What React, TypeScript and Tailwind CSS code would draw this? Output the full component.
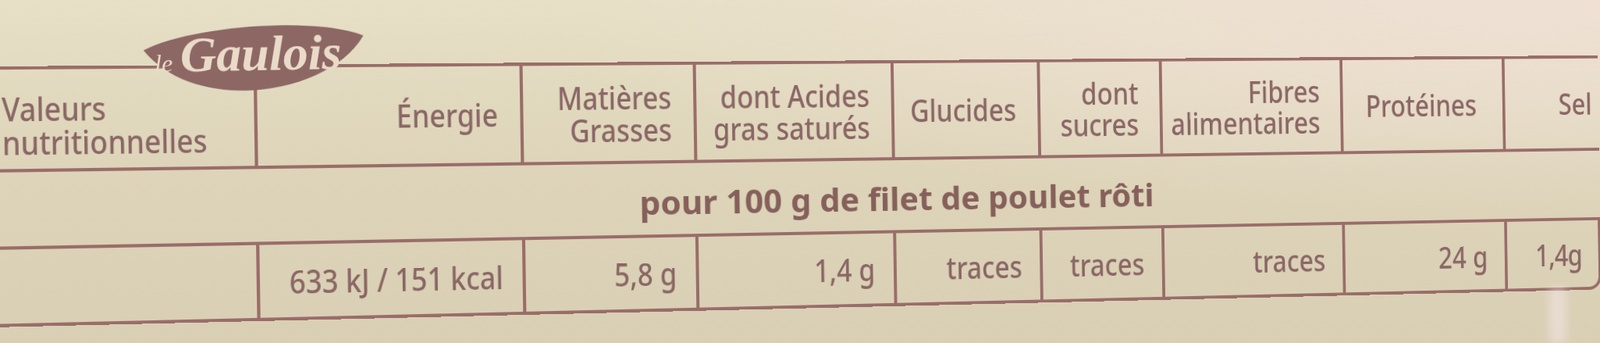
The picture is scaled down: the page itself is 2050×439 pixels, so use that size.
import React from 'react';

// Nutrition label photo: "le Gaulois" roast chicken fillet.
// The table is tilted with a light perspective to follow the photo.

const cols = 'grid-cols-[333px_325px_218px_255px_193px_164px_248px_228px_134px]';

function T({ children, left = false }: { children: React.ReactNode; left?: boolean }) {
  return (
    <span className={`inline-block scale-x-[0.86] ${left ? 'origin-left scale-x-[0.9]' : 'origin-right'}`}>{children}</span>
  );
}

function Head({ children, className = '' }: { children: React.ReactNode; className?: string }) {
  return (
    <div className={`flex items-center justify-end pr-[28px] text-right whitespace-nowrap border-r-4 border-[#9a6d69] ${className}`}>
      <T>{children}</T>
    </div>
  );
}

function Val({ children, className = '' }: { children: React.ReactNode; className?: string }) {
  return (
    <div className={`flex items-center justify-end pr-[24px] whitespace-nowrap border-r-4 border-b-4 border-[#9a6d69] ${className}`}>
      <T>{children}</T>
    </div>
  );
}

function Logo() {
  return (
    <div className="absolute left-[184px] top-[28px] w-[282px] h-[94px] rotate-[-1deg]">
      <svg width="282" height="94" viewBox="0 0 282 94" className="absolute inset-0">
        <path d="M0 34 C 60 4, 220 -6, 282 20 C 236 96, 66 118, 0 34 Z" fill="#8d6764" />
      </svg>
      <div className="absolute left-[14px] top-[5px] flex items-baseline text-[#eadbc9] font-['Liberation_Serif',serif] italic whitespace-nowrap">
        <span className="text-[32px] leading-none">le</span>
        <span className="text-[64px] leading-[72px] font-bold ml-[10px]">Gaulois</span>
      </div>
    </div>
  );
}

export default function App() {
  return (
    <div className="relative w-[2050px] h-[439px] overflow-hidden bg-linear-to-b from-[#e7e0c6] via-[#ddd4b9] to-[#d9cfb4]">
      <div className="absolute inset-0 bg-[radial-gradient(ellipse_at_95%_0%,#efe0d4_0%,transparent_45%)]" />
      <div className="relative blur-[0.7px]">
        <div className="pt-[78px]">
          <div className="ml-[18px] w-[2098px] origin-[992px_50%] [transform:rotate(-0.87deg)_perspective(2000px)_rotateY(6deg)] border-t-4 border-[#9a6d69] text-[#8a6665] font-['Noto_Sans','DejaVu_Sans',sans-serif] font-medium text-[40px] leading-[41px]">
            <div className={`grid ${cols} h-[121px]`}>
              <div className="flex items-center pl-[31px] pt-[14px] whitespace-nowrap border-r-4 border-[#9a6d69]">
                <T left>
                  Valeurs
                  <br />
                  nutritionnelles
                </T>
              </div>
              <Head>Énergie</Head>
              <Head>
                Matières
                <br />
                Grasses
              </Head>
              <Head className="pr-[24px]">
                dont Acides
                <br />
                gras saturés
              </Head>
              <Head>Glucides</Head>
              <Head className="pr-[24px]">
                dont
                <br />
                sucres
              </Head>
              <Head>
                Fibres
                <br />
                alimentaires
              </Head>
              <Head className="pr-[36px]">Protéines</Head>
              <div className="flex items-center pl-[76px] whitespace-nowrap">
                <T left>Sel</T>
              </div>
            </div>

            <div className="h-[94px] border-t-4 border-[#9a6d69] flex items-center pl-[802px] pt-[6px] whitespace-nowrap text-[42px] font-bold text-[#86605b]">
              pour 100 g de filet de poulet rôti
            </div>

            <div className={`grid ${cols} h-[98px] border-t-4 border-[#9a6d69]`}>
              <Val>{''}</Val>
              <Val>633 kJ / 151 kcal</Val>
              <Val>5,8 g</Val>
              <Val>1,4 g</Val>
              <Val>traces</Val>
              <Val>traces</Val>
              <Val>traces</Val>
              <Val>24 g</Val>
              <Val className="pr-[2px] rounded-br-[18px] tracking-[-1px]">1,4g</Val>
            </div>
          </div>
        </div>
        <Logo />
      </div>
      {/* light glare on the wrapper film */}
      <div className="absolute left-[1985px] top-[368px] w-[22px] h-[71px] bg-[#f1e4e6]/60 blur-[6px]" />
    </div>
  );
}
